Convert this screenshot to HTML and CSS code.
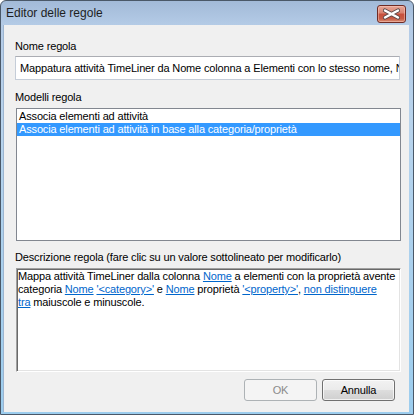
FILE: index.html
```html
<!DOCTYPE html>
<html lang="it">
<head>
<meta charset="utf-8">
<title>Editor delle regole</title>
<link rel="stylesheet" href="styles.css">
</head>
<body>
<div class="window">
  <div class="titlebar">
    <span class="title">Editor delle regole</span>
    <div class="close" aria-label="Chiudi">
      <svg width="27" height="16" viewBox="0 0 27 16">
        <path d="M7 4.5 L20 11.5 M20 4.5 L7 11.5" stroke="#5b4a4a" stroke-width="4.2" stroke-linecap="round" fill="none"/>
        <path d="M7 4.5 L20 11.5 M20 4.5 L7 11.5" stroke="#ffffff" stroke-width="2.4" stroke-linecap="round" fill="none"/>
      </svg>
    </div>
  </div>
  <div class="client">
    <div class="label label-first">Nome regola</div>
    <div class="textbox">Mappatura attività TimeLiner da Nome colonna a Elementi con lo stesso nome, Nome</div>

    <div class="label label-models">Modelli regola</div>
    <div class="listbox">
      <div class="item">Associa elementi ad attività</div>
      <div class="item selected">Associa elementi ad attività in base alla categoria/proprietà</div>
    </div>

    <div class="label label-desc">Descrizione regola (fare clic su un valore sottolineato per modificarlo)</div>
    <div class="descbox">
      <div class="desctext">Mappa attività TimeLiner dalla colonna <a class="link">Nome</a> a elementi con la proprietà avente<br>categoria <a class="link">Nome</a> <a class="link">'&lt;category&gt;'</a> e <a class="link">Nome</a> proprietà <a class="link">'&lt;property&gt;'</a>, <a class="link">non distinguere<br>tra</a> maiuscole e minuscole.</div>
    </div>

    <div class="buttons">
      <div class="btn disabled">OK</div>
      <div class="btn">Annulla</div>
    </div>
  </div>
</div>
</body>
</html>
```

FILE: styles.css
```css
html, body {
  margin: 0;
  padding: 0;
  background: #ffffff;
}

body {
  font-family: "Liberation Sans", Arial, sans-serif;
  font-size: 11px;
  color: #000000;
}

.window {
  width: 414px;
  height: 415px;
  box-sizing: border-box;
  border: 1px solid #4a5868;
  border-radius: 6px 6px 0 0;
  background: linear-gradient(to bottom, #a2bad8 0px, #b4cbe6 24px, #b8d3ec 120px, #9ccdee 100%);
  display: flex;
  flex-direction: column;
  padding: 0 4px 2px 2px;
  overflow: hidden;
}

.titlebar {
  height: 24px;
  flex: 0 0 24px;
  display: flex;
  align-items: center;
  justify-content: space-between;
}

.title {
  font-size: 12px;
  line-height: 15px;
  color: #1e1e1e;
  margin-left: 3px;
  margin-top: 1px;
}

.close {
  width: 27px;
  height: 16px;
  border: 1px solid #6f2b24;
  border-radius: 3px;
  margin-right: 3px;
  margin-top: 2px;
  background: linear-gradient(to bottom, #e6a596 0%, #d98472 42%, #c8503d 52%, #c65a44 78%, #d98d73 100%);
  box-shadow: inset 0 0 0 1px rgba(255, 210, 200, 0.45);
  display: flex;
}

.client {
  flex: 1;
  background: #f0f0f0;
  border-left: 1px solid #9db5d0;
  display: flex;
  flex-direction: column;
  padding: 0 8px 0 12px;
}

.label {
  line-height: 15px;
  letter-spacing: -0.15px;
  white-space: nowrap;
}

.label-first {
  margin-top: 14px;
  margin-left: -1px;
}

.label-models {
  margin-top: 10px;
  margin-left: -1px;
}

.label-desc {
  margin-top: 9px;
  margin-left: -1px;
}

.textbox {
  margin-top: 2px;
  margin-left: -1px;
  margin-right: 1px;
  height: 24px;
  box-sizing: border-box;
  background: #ffffff;
  border: 1px solid #c5cdd8;
  border-top-color: #abadb3;
  padding: 0 0 0 4px;
  line-height: 22px;
  white-space: nowrap;
  overflow: hidden;
  letter-spacing: -0.15px;
}

.listbox {
  margin-top: 3px;
  height: 133px;
  box-sizing: border-box;
  background: #ffffff;
  border: 1px solid #828790;
  padding-top: 1px;
}

.item {
  line-height: 13px;
  height: 13px;
  padding-left: 2px;
  white-space: nowrap;
  letter-spacing: -0.15px;
}

.item.selected {
  background: #3399ff;
  color: #ffffff;
}

.descbox {
  margin-top: 3px;
  height: 104px;
  box-sizing: border-box;
  background: #ffffff;
  border: 1px solid;
  border-color: #a0a0a0 #ffffff #ffffff #a0a0a0;
  box-shadow: inset 1px 1px 0 #696969, inset -1px -1px 0 #e3e3e3;
  padding: 1px 1px 1px 1px;
  overflow: hidden;
}

.desctext {
  line-height: 13px;
  white-space: nowrap;
  letter-spacing: -0.15px;
}

.link {
  color: #0066cc;
  text-decoration: underline;
}

.buttons {
  margin-top: 7px;
  margin-right: 6px;
  display: flex;
  justify-content: flex-end;
  gap: 5px;
}

.btn {
  width: 73px;
  height: 22px;
  box-sizing: border-box;
  border: 1px solid #707070;
  border-radius: 3px;
  background: linear-gradient(to bottom, #f2f2f2 0%, #ebebeb 48%, #dddddd 52%, #cfcfcf 100%);
  box-shadow: inset 0 0 0 1px rgba(255, 255, 255, 0.7);
  display: flex;
  align-items: center;
  justify-content: center;
  line-height: 15px;
  letter-spacing: -0.15px;
}

.btn.disabled {
  border-color: #adb2b5;
  background: #f4f4f4;
  box-shadow: none;
  color: #8a8a8a;
}
```
